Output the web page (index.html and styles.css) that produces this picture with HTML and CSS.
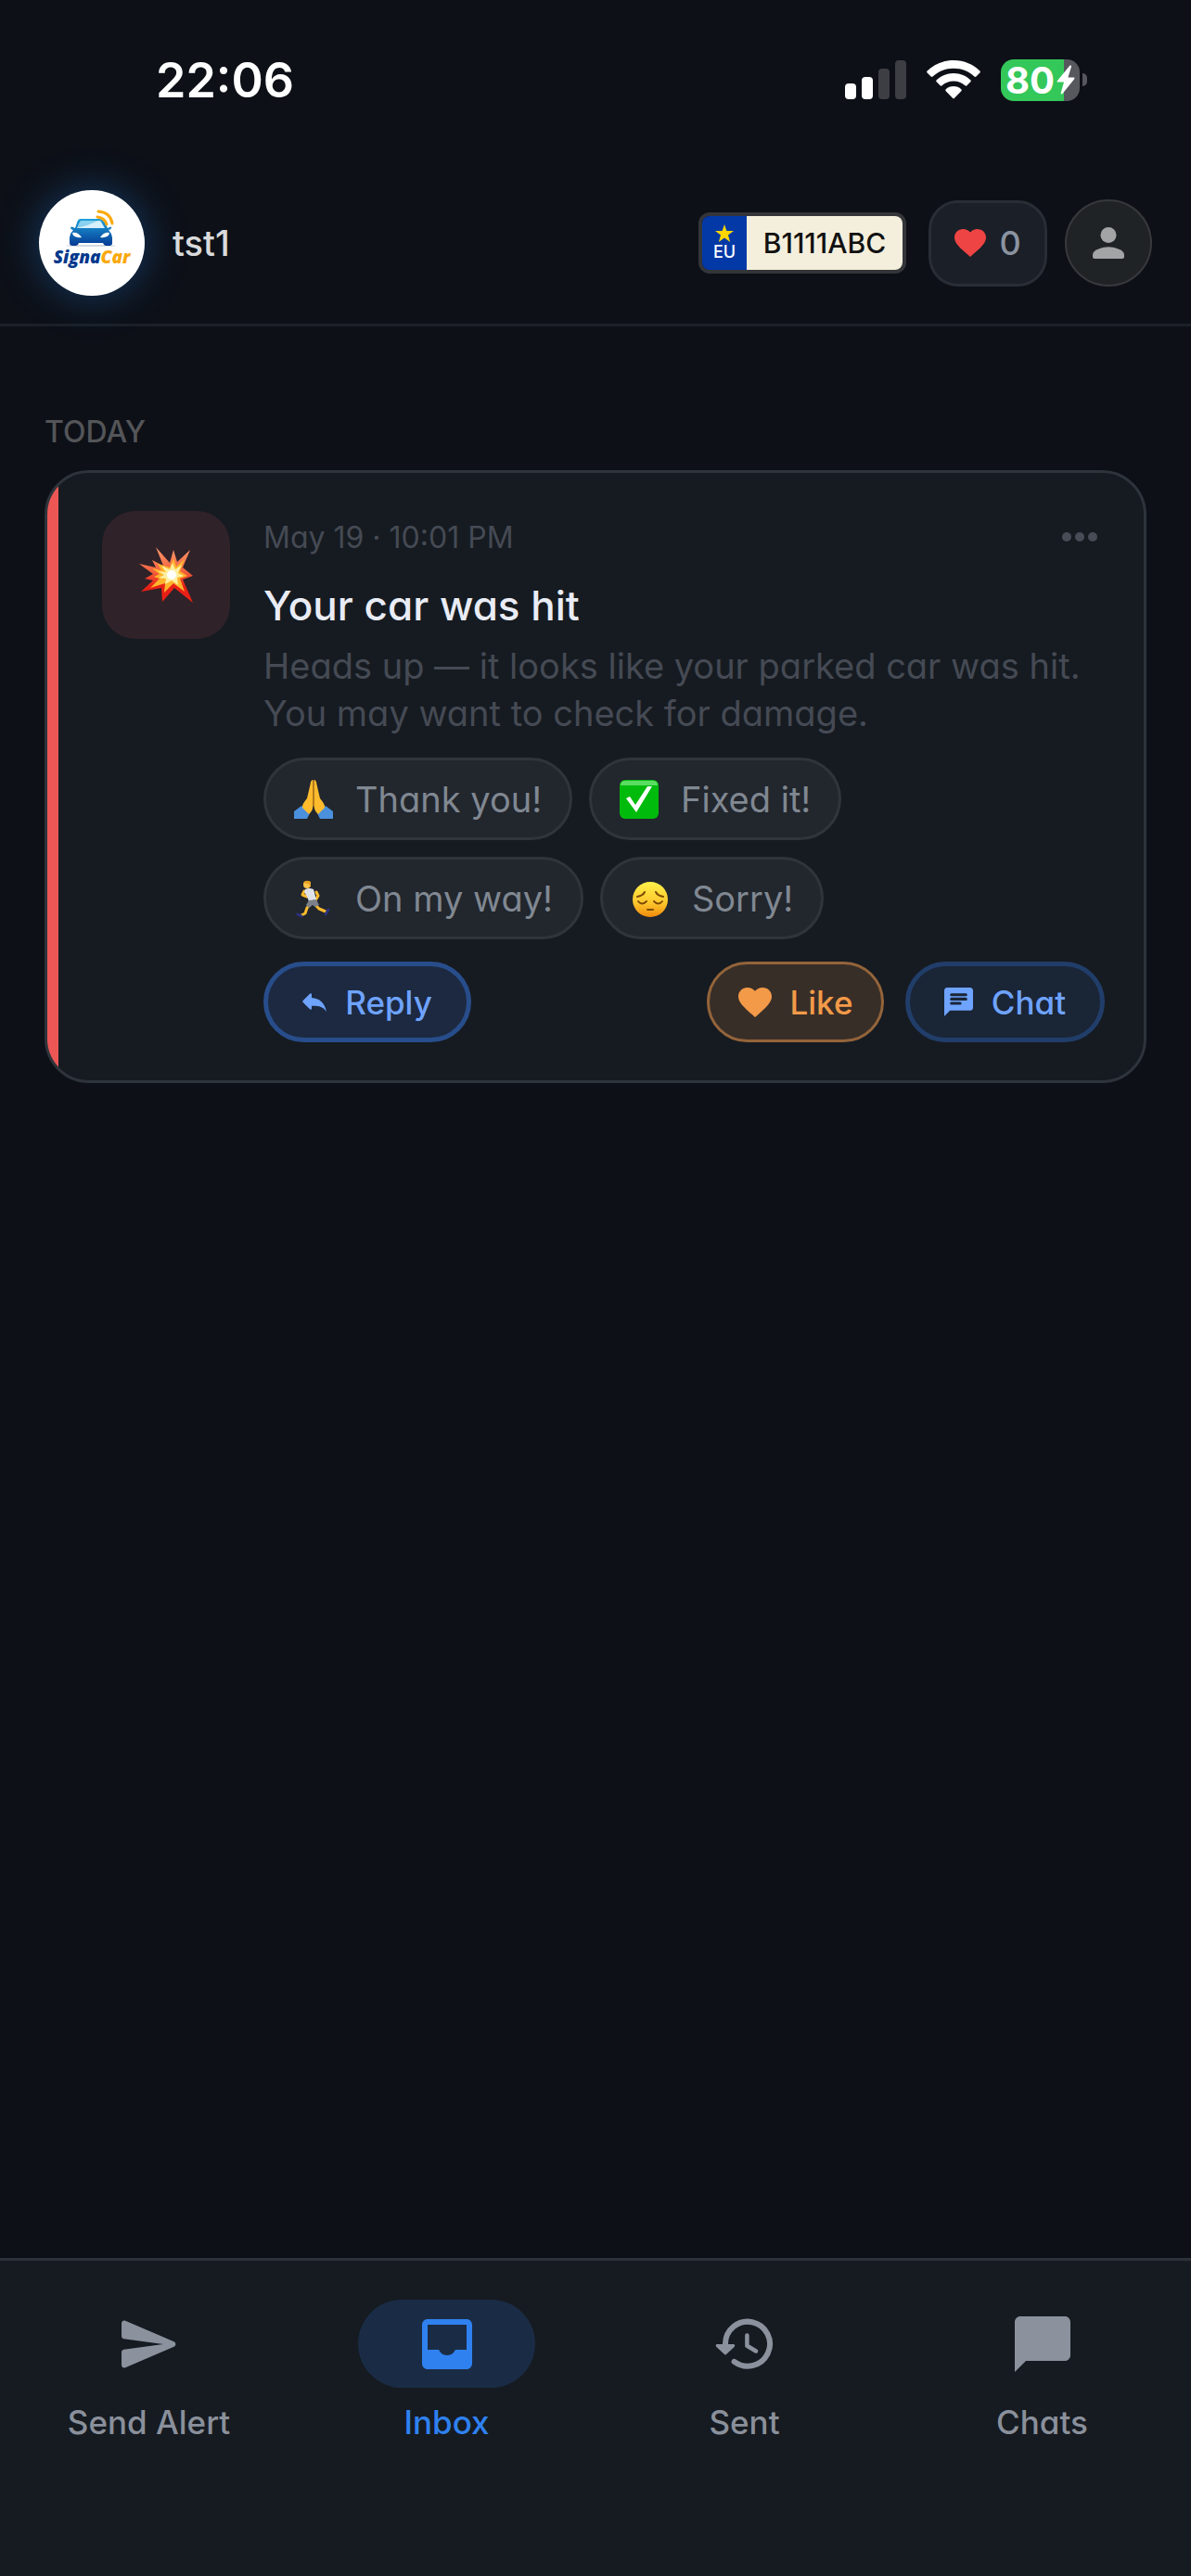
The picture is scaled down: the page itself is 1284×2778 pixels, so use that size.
FILE: index.html
```
<!DOCTYPE html>
<html lang="en">
<head>
  <meta charset="UTF-8" />
  <meta name="viewport" content="width=device-width, initial-scale=1.0" />
  <title>SignaCar - Inbox</title>
  <link rel="stylesheet" href="styles.css">
</head>
<body>
  <div class="status-bar">
    <div class="clock">22:06</div>
    <div class="status-icons">
      <svg width="66" height="42" viewBox="0 0 66 42">
        <rect x="0" y="25" width="12" height="17" rx="4" fill="#fff"/>
        <rect x="18" y="18" width="12" height="24" rx="4" fill="#fff"/>
        <rect x="36" y="9" width="12" height="33" rx="4" fill="#3c3e43"/>
        <rect x="54" y="0" width="12" height="42" rx="4" fill="#3c3e43"/>
      </svg>
      <svg width="58" height="42" viewBox="0 0 58 42" fill="#fff">
        <path d="M29 0C17.500 0 7.500 4.600 0.600 11.600Q-0.300 12.600 0.600 13.600L4.600 17.600Q5.600 18.500 6.600 17.600C12.500 12 20 8.800 29 8.800S45.500 12 51.400 17.600Q52.400 18.500 53.400 17.600L57.400 13.600Q58.300 12.600 57.400 11.600C50.500 4.600 40.500 0 29 0Z"/>
        <path d="M29 14C21.500 14 15.300 17 10.700 21.300Q9.700 22.300 10.700 23.300L14.600 27.200Q15.600 28.100 16.600 27.200C20 24.100 24 22.400 29 22.400S38 24.100 41.400 27.200Q42.400 28.100 43.400 27.200L47.300 23.300Q48.300 22.300 47.300 21.300C42.700 17 36.500 14 29 14Z"/>
        <path d="M29 28C25.700 28 23 29.200 20.700 31.200Q19.700 32.200 20.700 33.200L28 40.800Q29 41.800 30 40.800L37.300 33.200Q38.300 32.200 37.300 31.200C35 29.200 32.300 28 29 28Z"/>
      </svg>
      <div class="battery">
        <div class="battery-body">
          <span>80</span>
          <svg width="20" height="32" viewBox="0 0 20 32" fill="#fff"><path d="M14.500 0.500L1 17Q0 18.500 1.500 18.500H8L4.600 30.500Q5 32 6.500 31L19 15.500Q20.200 13.800 18.500 13.500H12.500L16 1.800Q16.200 0 14.500 0.500Z"/></svg>
        </div>
        <div class="battery-tip"></div>
      </div>
    </div>
  </div>

  <header class="header">
    <div class="avatar">
      <svg width="114" height="114" viewBox="0 0 114 114">
        <defs>
          <linearGradient id="car" x1="0" y1="0" x2="0" y2="1">
            <stop offset="0" stop-color="#1fa2dc"/>
            <stop offset="1" stop-color="#053a94"/>
          </linearGradient>
        </defs>
        <ellipse cx="56" cy="60" rx="27" ry="1" fill="#d5d9df"/>
        <path fill="url(#car)" d="M45 31H65Q69 31 71 35L74 41Q79 38 78 41Q77 43 75 43Q79 47 79 52V57Q79 60 76 60H72Q70 60 69 57H43Q42 60 40 60H36Q33 60 33 57V52Q33 47 37 43Q35 43 34 41Q34 38 39 41L41 35Q42 31 45 31Z"/>
        <path fill="#d8f0fb" d="M46 33H65Q67 33 68 36L71 41H41L44 35Q45 33 46 33Z"/>
        <path fill="#8ad0f0" d="M41 41L52 38L64 33H46Q45 33 44 35Z"/>
        <path fill="#fff" d="M36 46Q42 45 46 51Q37 52 36 46ZM76 46Q70 45 66 51Q75 52 76 46Z"/>
        <path stroke="#fba90e" stroke-width="3" stroke-linecap="round" fill="none" d="M64 23Q77 24 79 36M63 29Q71 30 73 37"/>
        <text x="57" y="79" text-anchor="middle" class="logo-text"><tspan fill="#04388c">Signa</tspan><tspan fill="#fba90e">Car</tspan></text>
      </svg>
    </div>
    <div class="username">tst1</div>
    <div class="plate">
      <div class="plate-eu">
        <svg width="20" height="20" viewBox="0 0 20 20"><path fill="#ffd600" d="M10 0l2.400 7H20l-6 4.500 2.200 7.500L10 14.500 3.800 19 6 11.500 0 7h7.600z"/></svg>
        <span>EU</span>
      </div>
      <div class="plate-number">B1111ABC</div>
    </div>
    <button class="likes" aria-label="Likes received">
      <svg width="34" height="30" viewBox="2 3 20 18.400" preserveAspectRatio="none"><path fill="#ef4444" d="M12 21.350l-1.450-1.320C5.400 15.360 2 12.280 2 8.500 2 5.420 4.420 3 7.500 3c1.740 0 3.410.810 4.500 2.090C13.090 3.810 14.760 3 16.500 3 19.580 3 22 5.420 22 8.500c0 3.780-3.400 6.860-8.550 11.540L12 21.350z"/></svg>
      <span>0</span>
    </button>
    <button class="profile" aria-label="Profile">
      <svg width="34" height="34" viewBox="4 4 16 16" fill="#a3a4a6"><circle cx="12" cy="8" r="4"/><path d="M12 14c-2.670 0-8 1.340-8 4v1q0 1 1 1h14q1 0 1-1v-1c0-2.660-5.330-4-8-4z"/></svg>
    </button>
  </header>

  <main class="inbox">
    <h2 class="day">TODAY</h2>
    <article class="alert">
      <div class="alert-icon">
        <svg width="58" height="60" viewBox="0 0 58 60">
          <defs>
            <linearGradient id="boom" x1="0" y1="0" x2="0" y2="1">
              <stop offset="0" stop-color="#ff9a6c"/>
              <stop offset="0.450" stop-color="#f2603c"/>
              <stop offset="0.700" stop-color="#e92015"/>
            </linearGradient>
          </defs>
          <path fill="url(#boom)" d="M18 0L33 17L37 3L41 16L55 3L47 22L58 31L47 35L58 60L38 44L25 59L24 44L2 48L15 36L6 34L15 29L0 18L18 22L14 14L26 20Z"/>
          <path fill="#ffb42c" d="M20 18L33 22L37 12L40 21L49 13L44 26L52 31L44 34L49 48L37 39L27 49L28 39L12 44L22 34L16 32L22 29L14 23L24 25Z"/>
          <path fill="#fff0a0" d="M24 20L33 24L36 17L39 24L46 19L42 28L48 31L41 33L42 41L35 36L28 40L29 34L21 33L27 30L20 26L29 27Z"/>
          <circle cx="35" cy="30" r="5" fill="#fff"/>
        </svg>
      </div>
      <div class="alert-content">
        <div class="alert-top">
          <time class="alert-date">May 19 · 10:01 PM</time>
          <button class="more" aria-label="More"><i></i><i></i><i></i></button>
        </div>
        <h3 class="alert-title">Your car was hit</h3>
        <p class="alert-text">Heads up — it looks like your parked car was hit. You may want to check for damage.</p>
        <div class="quick-replies">
          <button class="chip">
            <svg width="42" height="42" viewBox="0 0 42 42">
              <path fill="#4a90dc" d="M0 42V34L8 28L17 36L14 42ZM42 42V34L34 28L25 36L28 42Z"/>
              <path fill="#fdbb2d" d="M20.500 0Q18 0 17.500 5L14 20Q8 27 9 30L16 37Q20 34 20.500 28ZM21.500 0Q24 0 24.500 5L28 20Q34 27 33 30L26 37Q22 34 21.500 28Z"/>
              <path stroke="#d98306" fill="none" d="M21 1V28"/>
            </svg>
            Thank you!
          </button>
          <button class="chip">
            <svg width="42" height="42" viewBox="0 0 42 42">
              <rect width="42" height="42" rx="6" fill="#00ba0c"/>
              <path fill="#5bdc62" d="M6 1H36Q41 1 41 6H1Q1 1 6 1Z"/>
              <path fill="#fff" d="M7 20L11 18L17 27L30 7H35L18 35Z"/>
            </svg>
            Fixed it!
          </button>
          <button class="chip">
            <svg width="42" height="42" viewBox="0 0 42 42">
              <path stroke="#fdbb2d" stroke-width="3" stroke-linecap="round" stroke-linejoin="round" fill="none" d="M11 13L9 17L14 19M18 27L14 31L12 37L8 39M22 27L27 32L34 35M24 14L26 18L23 23"/>
              <path fill="#dfe2e8" d="M12 11Q16 9 21 11L24 22L16 24Q14 18 11 14Z"/>
              <path fill="#7d8088" d="M16 23L24 22L27 28L23 30L20 28L16 31L13 28Z"/>
              <circle cx="14" cy="6" r="4" fill="#fdc54a"/>
              <path fill="#e8a020" d="M10 4Q13 0 18 3V8L15 5Z"/>
              <path stroke="#2b327c" stroke-width="3" stroke-linecap="round" d="M4 38L8 40M37 33L34 38"/>
            </svg>
            On my way!
          </button>
          <button class="chip">
            <svg width="42" height="42" viewBox="0 0 42 42">
              <defs>
                <linearGradient id="face" x1="0" y1="0" x2="0" y2="1">
                  <stop offset="0" stop-color="#fff24a"/>
                  <stop offset="0.600" stop-color="#fdc62c"/>
                  <stop offset="1" stop-color="#f08a0c"/>
                </linearGradient>
              </defs>
              <circle cx="21" cy="22" r="19" fill="url(#face)"/>
              <path stroke="#7d4a08" stroke-width="2" stroke-linecap="round" fill="none" d="M8 24Q12 29 17 24M25 24Q30 29 34 24M7 19Q13 18 15 14M27 14Q29 18 35 19M18 33H24"/>
            </svg>
            Sorry!
          </button>
        </div>
        <div class="actions">
          <button class="action reply">
            <svg width="26" height="20" viewBox="0 0 26 20" fill="#6ea3ff"><path d="M8 .700Q10-.500 10 1.500V5C18 5.500 24 10 26 20C22 14 17 13.500 10 13.700V16.500Q10 18.500 8 17.300L.700 10Q-.200 9 .700 8Z"/></svg>
            Reply
          </button>
          <button class="action like">
            <svg width="36" height="32" viewBox="2 3 20 18.400" preserveAspectRatio="none"><path fill="#f39a48" d="M12 21.350l-1.450-1.320C5.400 15.360 2 12.280 2 8.500 2 5.420 4.420 3 7.500 3c1.740 0 3.410.810 4.500 2.090C13.090 3.810 14.760 3 16.500 3 19.580 3 22 5.420 22 8.500c0 3.780-3.400 6.860-8.550 11.540L12 21.350z"/></svg>
            Like
          </button>
          <button class="action chat">
            <svg width="31" height="31" viewBox="2 2 20 20"><path fill="#6ea3ff" d="M20 2H4c-1.100 0-2 .900-2 2v18l4-4h14c1.100 0 2-.900 2-2V4c0-1.100-.900-2-2-2z"/><path stroke="#1a2536" stroke-width="2" stroke-linecap="round" d="M7 7H17M7 10H17M7 13H13"/></svg>
            Chat
          </button>
        </div>
      </div>
    </article>
  </main>

  <nav class="tabs">
    <a class="tab" href="#send">
      <span class="tab-icon"><svg width="72" height="72" viewBox="0 0 24 24" fill="#8b919d"><path d="M3.400 20.400l17.450-7.480c.810-.350.810-1.490 0-1.840L3.400 3.600c-.660-.290-1.390.200-1.390.910L2 9.120c0 .500.370.930.870.990L17 12 2.870 13.880c-.500.070-.870.500-.870 1l.010 4.610c0 .710.730 1.200 1.390.910z"/></svg></span>
      Send Alert
    </a>
    <a class="tab active" href="#inbox">
      <span class="tab-icon"><svg width="72" height="72" viewBox="0 0 24 24" fill="#2f81f0"><path d="M19 3H5c-1.100 0-2 .900-2 2v14c0 1.100.900 2 2 2h14c1.100 0 2-.900 2-2V5c0-1.100-.900-2-2-2zm0 11h-4c-.500 1-1.500 2-3 2s-2.500-1-3-2H5V5h14v9z"/></svg></span>
      Inbox
    </a>
    <a class="tab" href="#sent">
      <span class="tab-icon"><svg width="72" height="72" viewBox="0 0 24 24"><path stroke="#8b919d" stroke-width="2" stroke-linecap="round" fill="none" d="M5 12.500V12a8 8 0 1 1 3.200 6.300"/><path fill="#8b919d" d="M1.900 12H8Q8.700 12.200 8.200 13L5.400 15.600Q5 16 4.600 15.600L1.800 13Q1.300 12.200 1.900 12Z"/><path stroke="#8b919d" stroke-width="1.500" stroke-linecap="round" stroke-linejoin="round" fill="none" d="M12.800 8.800V12.600L16 14.500"/></svg></span>
      Sent
    </a>
    <a class="tab" href="#chats">
      <span class="tab-icon"><svg width="72" height="72" viewBox="0 0 24 24" fill="#8b919d"><path d="M2 22V4c0-1.100.900-2 2-2h16c1.100 0 2 .900 2 2v12c0 1.100-.900 2-2 2H6l-4 4z"/></svg></span>
      Chats
    </a>
  </nav>
</body>
</html>
```

FILE: styles.css
```
* {
  box-sizing: border-box;
}
body {
  margin: 0;
  min-height: 100vh;
  display: flex;
  flex-direction: column;
  background-color: #0d1017;
  color: #e9ecf5;
  font-family: Inter, "Liberation Sans", sans-serif;
  font-feature-settings: "cv11";
}
svg {
  display: block;
  flex: none;
}
button {
  font: inherit;
  font-feature-settings: inherit;
  border: none;
  background: none;
  padding: 0;
  cursor: pointer;
}
.status-bar {
  display: flex;
  justify-content: space-between;
  align-items: center;
  height: 172px;
  padding: 0 112px 0 168px;
}
.clock {
  color: #fff;
  font-size: 52px;
  font-weight: 600;
}
.status-icons {
  display: flex;
  align-items: center;
  gap: 22px;
}
.battery {
  display: flex;
  align-items: center;
  gap: 3px;
}
.battery-body {
  display: flex;
  align-items: center;
  justify-content: center;
  gap: 2px;
  width: 85px;
  height: 45px;
  border-radius: 14px;
  background: linear-gradient(to right, #34c759 80%, #56585e 80%);
  color: #fff;
  font-size: 40px;
  font-weight: 700;
}
.battery-tip {
  width: 5px;
  height: 14px;
  border-radius: 0 5px 5px 0;
  background-color: #56585e;
}
.header {
  display: flex;
  align-items: center;
  height: 180px;
  padding: 3px 42px 0;
  border-bottom: 3px solid #1c2028;
}
.avatar {
  border-radius: 50%;
  background-color: #fff;
  box-shadow: 0 0 40px 4px rgba(33, 118, 210, 0.35);
}
.logo-text {
  font-family: "Open Sans", sans-serif;
  font-size: 19px;
  font-weight: 800;
  font-style: italic;
}
.username {
  margin: 0 auto 0 30px;
  color: #d9dadb;
  font-size: 38px;
  font-weight: 500;
}
.plate {
  display: flex;
  width: 224px;
  height: 66px;
  margin-right: 24px;
  border: 4px solid #333539;
  border-radius: 12px;
  overflow: hidden;
}
.plate-eu {
  display: flex;
  flex-direction: column;
  align-items: center;
  justify-content: center;
  width: 48px;
  background-color: #0339a6;
  color: #fff;
  font-size: 18px;
  line-height: 20px;
  font-weight: 500;
}
.plate-number {
  flex: 1;
  background-color: #f4efdc;
  color: #111;
  font-size: 30px;
  font-weight: 500;
  line-height: 58px;
  text-align: center;
}
.likes {
  display: flex;
  align-items: center;
  justify-content: center;
  gap: 14px;
  width: 128px;
  height: 93px;
  margin-right: 19px;
  border: 3px solid #292d35;
  border-radius: 32px;
  background-color: #1b1f27;
  color: #8b93a1;
  font-size: 36px;
  font-weight: 500;
}
.profile {
  display: flex;
  align-items: center;
  justify-content: center;
  width: 94px;
  height: 94px;
  border: 2px solid #37393d;
  border-radius: 50%;
  background-color: #202326;
}
.inbox {
  flex: 1;
  padding: 92px 48px;
}
.day {
  margin: 0 0 19px;
  color: #545558;
  font-size: 32px;
  line-height: 44px;
  font-weight: 500;
}
.alert {
  display: flex;
  gap: 36px;
  padding: 41px 42px 41px 59px;
  border: 3px solid #2e343b;
  border-radius: 48px;
  background: linear-gradient(to right, #ec5756 12px, #161b21 12px);
}
.alert-icon {
  display: flex;
  align-items: center;
  justify-content: center;
  flex: none;
  width: 138px;
  height: 138px;
  border-radius: 36px;
  background-color: #302229;
}
.alert-content {
  flex: 1;
}
.alert-top {
  display: flex;
  align-items: center;
  justify-content: space-between;
  height: 56px;
}
.alert-date {
  color: #454a54;
  font-size: 32px;
}
.more {
  display: flex;
  gap: 4px;
  padding: 8px;
}
.more i {
  width: 10px;
  height: 10px;
  border-radius: 50%;
  background-color: #474c56;
}
.alert-title {
  margin: 16px 0 10px;
  font-size: 44px;
  line-height: 60px;
  font-weight: 500;
}
.alert-text {
  margin: 0;
  color: #454a54;
  font-size: 38px;
  line-height: 51px;
}
.quick-replies {
  display: flex;
  flex-wrap: wrap;
  gap: 18px;
  margin-top: 22px;
}
.chip {
  display: flex;
  align-items: center;
  gap: 24px;
  height: 89px;
  padding: 0 30px;
  border: 3px solid #30343b;
  border-radius: 45px;
  background-color: #22262d;
  color: #808892;
  font-size: 38px;
}
.actions {
  display: flex;
  gap: 23px;
  margin-top: 24px;
}
.action {
  display: flex;
  align-items: center;
  justify-content: center;
  gap: 20px;
  height: 87px;
  border: 5px solid;
  border-radius: 44px;
  font-size: 35px;
  font-weight: 500;
}
.reply {
  width: 224px;
  margin-right: auto;
  border-color: #284d8b;
  background-color: #1c2940;
  color: #6ea3ff;
}
.like {
  width: 191px;
  border: 3px solid #94643a;
  background-color: #382e28;
  color: #f39a48;
}
.chat {
  width: 215px;
  border-color: #213d69;
  background-color: #1a2536;
  color: #6ea3ff;
}
.tabs {
  display: grid;
  grid-template-columns: repeat(4, 1fr);
  height: 343px;
  padding-top: 42px;
  border-top: 3px solid #2d3139;
  background-color: #161b21;
}
.tab {
  display: flex;
  flex-direction: column;
  align-items: center;
  gap: 17px;
  color: #8a909b;
  font-size: 35px;
  line-height: 40px;
  font-weight: 500;
  text-decoration: none;
}
.tab-icon {
  display: flex;
  align-items: center;
  justify-content: center;
  width: 191px;
  height: 95px;
  border-radius: 48px;
}
.active {
  color: #2f81f0;
}
.active .tab-icon {
  background-color: #1a2c45;
}
```
